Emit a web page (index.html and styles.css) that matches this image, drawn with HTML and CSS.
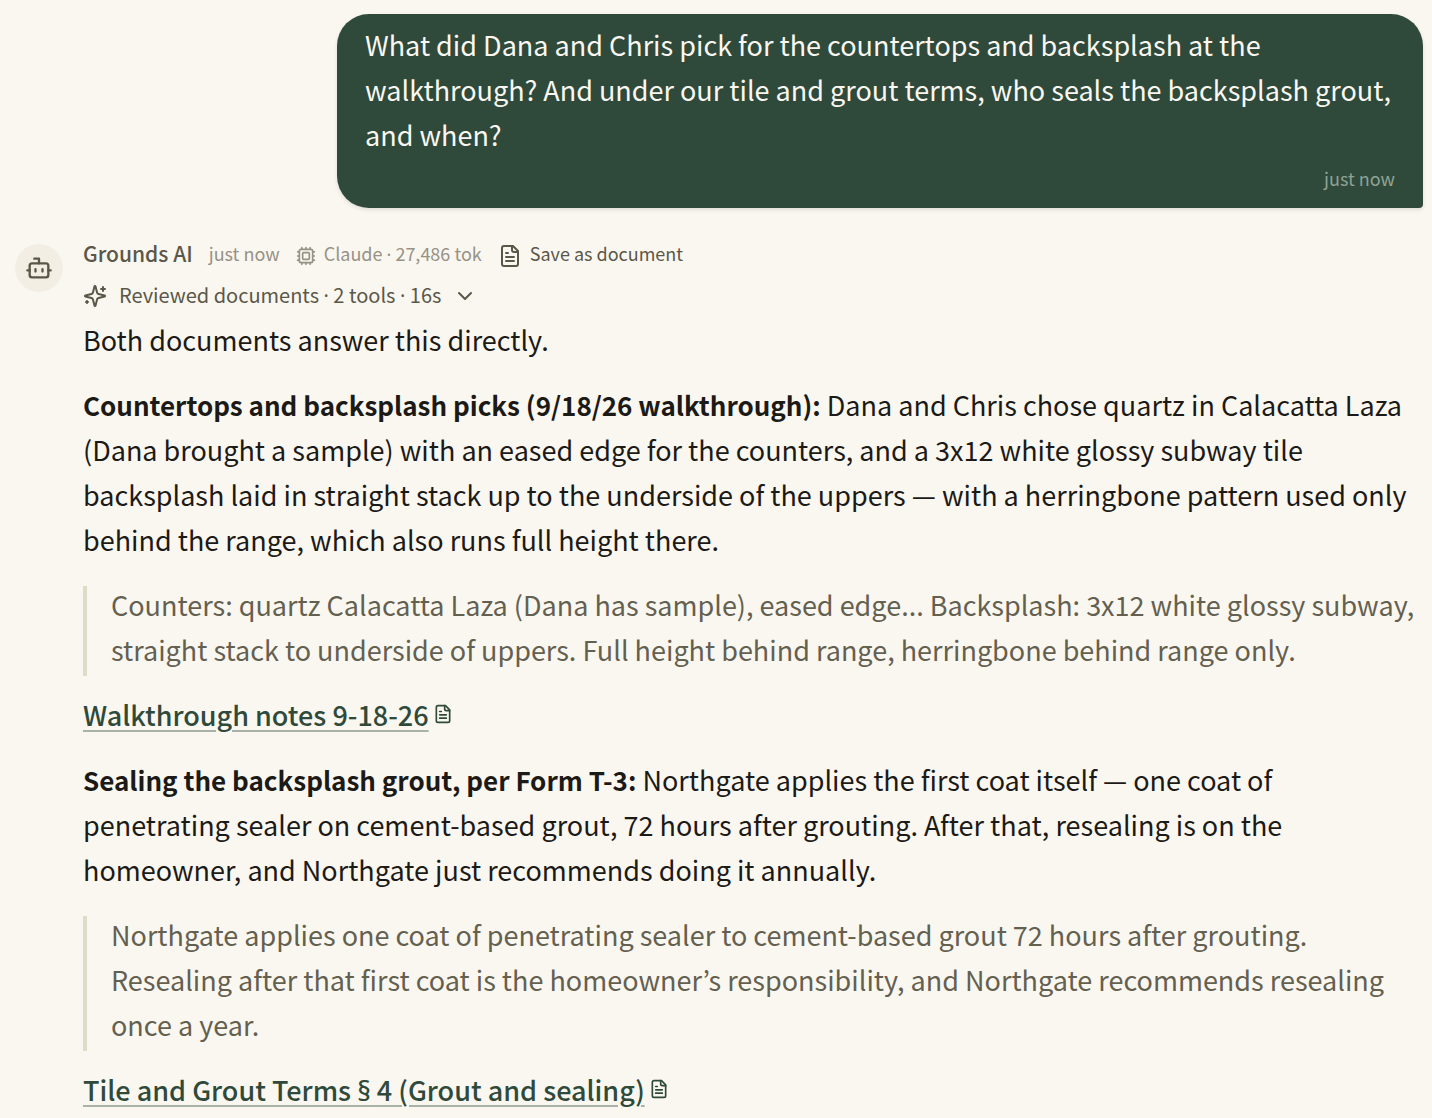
FILE: index.html
```html
<!DOCTYPE html>
<html lang="en">
<head>
    <meta charset="UTF-8">
    <meta name="viewport" content="width=device-width, initial-scale=1.0">
    <title>Grounds AI</title>
    <link rel="stylesheet" href="styles.css">
</head>
<body>
    <main class="chat">
        <section class="question">
            <p class="question-text">What did Dana and Chris pick for the countertops and backsplash at the walkthrough? And under our tile and grout terms, who seals the backsplash grout, and when?</p>
            <time class="question-time">just now</time>
        </section>

        <article class="answer">
            <div class="avatar">
                <svg class="icon" width="28" height="28" viewBox="0 0 24 24"><path d="M12 8V4H8"/><rect x="4" y="8" width="16" height="12" rx="2"/><path d="M2 14h2M20 14h2M15 13v2M9 13v2"/></svg>
            </div>
            <div class="answer-body">
                <header class="meta">
                    <span class="name">Grounds AI</span>
                    <time class="muted">just now</time>
                    <span class="model muted">
                        <svg class="icon" width="20" height="20" viewBox="0 0 24 24"><rect x="4" y="4" width="16" height="16" rx="2"/><rect x="8" y="8" width="8" height="8" rx="1"/><path d="M12 20v2M12 2v2M17 20v2M17 2v2M2 12h2M2 17h2M2 7h2M20 12h2M20 17h2M20 7h2M7 20v2M7 2v2"/></svg>
                        <span>Claude <span class="sign">·</span> 27,486 tok</span>
                    </span>
                    <button class="save" type="button">
                        <svg class="icon" width="24" height="24" viewBox="0 0 24 24"><path d="M15 2H6a2 2 0 0 0-2 2v16a2 2 0 0 0 2 2h12a2 2 0 0 0 2-2V7Z"/><path d="M14 2v4a2 2 0 0 0 2 2h4M10 9H8M16 13H8M16 17H8"/></svg>
                        Save as document
                    </button>
                </header>
                <button class="steps" type="button">
                    <svg class="icon" width="24" height="24" viewBox="0 0 24 24"><path d="M9.937 15.5A2 2 0 0 0 8.5 14.063l-6.135-1.582a.5.5 0 0 1 0-.962L8.5 9.936A2 2 0 0 0 9.937 8.5l1.582-6.135a.5.5 0 0 1 .963 0L14.063 8.5A2 2 0 0 0 15.5 9.937l6.135 1.581a.5.5 0 0 1 0 .964L15.5 14.063a2 2 0 0 0-1.437 1.437l-1.582 6.135a.5.5 0 0 1-.963 0zM20 3v4M22 5h-4M4 17v2M5 18H3"/></svg>
                    <span>Reviewed documents <span class="sign">·</span> 2 tools <span class="sign">·</span> 16s</span>
                    <svg class="icon" width="24" height="24" viewBox="0 0 24 24"><path d="m6 9 6 6 6-6"/></svg>
                </button>
                <div class="prose">
                    <p>Both documents answer this directly.</p>
                    <p><strong>Countertops and backsplash picks (9/18/26 walkthrough):</strong> Dana and Chris chose quartz in Calacatta Laza (Dana brought a sample) with an eased edge for the counters, and a 3x12 white glossy subway tile backsplash laid in straight stack up to the underside of the uppers — with a herringbone pattern used only behind the range, which also runs full height there.</p>
                    <blockquote>
                        <p>Counters: quartz Calacatta Laza (Dana has sample), eased edge... Backsplash: 3x12 white glossy subway, straight stack to underside of uppers. Full height behind range, herringbone behind range only.</p>
                    </blockquote>
                    <p><a class="source" href="#walkthrough">Walkthrough notes 9-18-26</a><svg class="icon source-icon" width="20" height="20" viewBox="0 0 24 24"><path d="M15 2H6a2 2 0 0 0-2 2v16a2 2 0 0 0 2 2h12a2 2 0 0 0 2-2V7Z"/><path d="M14 2v4a2 2 0 0 0 2 2h4M10 9H8M16 13H8M16 17H8"/></svg></p>
                    <p><strong>Sealing the backsplash grout, per Form T-3:</strong> Northgate applies the first coat itself — one coat of penetrating sealer on cement-based grout, 72 hours after grouting. After that, resealing is on the homeowner, and Northgate just recommends doing it annually.</p>
                    <blockquote>
                        <p>Northgate applies one coat of penetrating sealer to cement-based grout 72 hours after grouting. Resealing after that first coat is the homeowner’s responsibility, and Northgate recommends resealing once a year.</p>
                    </blockquote>
                    <p><a class="source" href="#tile-terms">Tile and Grout Terms <span class="sign">§</span> 4 (Grout and sealing)</a><svg class="icon source-icon" width="20" height="20" viewBox="0 0 24 24"><path d="M15 2H6a2 2 0 0 0-2 2v16a2 2 0 0 0 2 2h12a2 2 0 0 0 2-2V7Z"/><path d="M14 2v4a2 2 0 0 0 2 2h4M10 9H8M16 13H8M16 17H8"/></svg></p>
                </div>
            </div>
        </article>
    </main>
</body>
</html>
```
FILE: styles.css
```css
*{
    margin: 0;
    padding: 0;
    box-sizing: border-box;
}
body{
    background-color: #faf7f1;
    color: #1c1a17;
    font-family: "Noto Sans CJK KR", "Open Sans", sans-serif;
    font-size: 27px;
    line-height: 45px;
}
button{
    border: none;
    background: none;
    color: inherit;
    font: inherit;
    cursor: pointer;
}
.icon{
    flex: none;
    fill: none;
    stroke: currentColor;
    stroke-width: 2;
    stroke-linecap: round;
    stroke-linejoin: round;
}
/* the CJK font draws these signs too wide */
.sign{
    font-family: "Noto Sans", sans-serif;
    line-height: 1;
}
.chat{
    display: flex;
    flex-direction: column;
    gap: 32px;
    padding: 14px 9px 0 15px;
}
.question{
    display: flex;
    flex-direction: column;
    gap: 3px;
    margin-left: 322px;
    padding: 8px 28px 12px;
    border-radius: 32px 32px 4px 32px;
    background-color: #2f4a3b;
    color: #faf7f1;
    box-shadow: 0 2px 4px rgba(0, 0, 0, 0.1);
}
.question-time{
    align-self: flex-end;
    color: #8ea295;
    font-size: 18px;
    line-height: 36px;
}
.answer{
    display: flex;
    gap: 20px;
}
.avatar{
    display: flex;
    flex: none;
    align-items: center;
    justify-content: center;
    width: 48px;
    height: 48px;
    margin-top: 4px;
    border-radius: 50%;
    background-color: #f3eee3;
    color: #5b5748;
}
.answer-body{
    flex: 1;
    min-width: 0;
}
.meta{
    display: flex;
    align-items: center;
    gap: 16px;
    font-size: 18px;
    line-height: 26px;
}
.meta .icon{
    margin: 3px 0 -3px;
}
.name{
    color: #5b5748;
    font-size: 21px;
    font-weight: 500;
}
.muted{
    color: #969285;
}
.model,
.save,
.steps{
    display: flex;
    align-items: center;
    gap: 8px;
}
.save,
.steps{
    color: #5b5748;
}
.steps{
    gap: 12px;
    margin-top: 16px;
    font-size: 20px;
    line-height: 26px;
}
.steps .icon{
    margin: 1px 0 -1px;
}
.prose{
    margin-top: 9px;
}
.prose > * + *{
    margin-top: 20px;
}
strong{
    font-size: 26px;
    font-weight: 700;
}
.prose > blockquote{
    display: flow-root;
    margin-top: 24px;
    padding-left: 24px;
    border-left: 4px solid #e0dac8;
    color: #646050;
}
blockquote p{
    margin: -4px 0 4px;
}
.prose > blockquote + p{
    margin-top: 16px;
}
.source{
    color: #2f4a3b;
    font-weight: 500;
    text-decoration: underline;
    text-decoration-color: rgba(47, 74, 59, 0.4);
    text-decoration-thickness: 2px;
    text-underline-offset: 4px;
}
.source-icon{
    margin-left: 4px;
    color: #2f4a3b;
    vertical-align: 2px;
}
```
